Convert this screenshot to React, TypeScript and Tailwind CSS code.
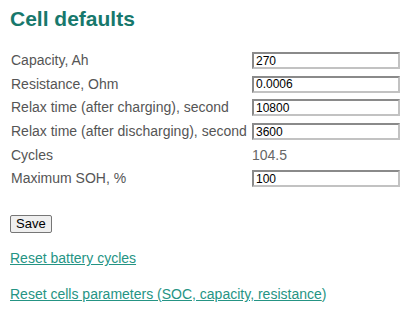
const rows: { label: string; value: string; input: boolean }[] = [
  { label: "Capacity, Ah", value: "270", input: true },
  { label: "Resistance, Ohm", value: "0.0006", input: true },
  { label: "Relax time (after charging), second", value: "10800", input: true },
  { label: "Relax time (after discharging), second", value: "3600", input: true },
  { label: "Cycles", value: "104.5", input: false },
  { label: "Maximum SOH, %", value: "100", input: true },
];

export default function App() {
  return (
    <div
      className="w-[416px] h-[313px] bg-white px-[10px] overflow-hidden"
      style={{ fontFamily: '"Liberation Sans", Arial, sans-serif' }}
    >
      {/* Title */}
      <h1 className="text-[21px] font-bold text-[#17786c] leading-none pt-[8px]">
        Cell defaults
      </h1>

      {/* Settings table */}
      <div className="mt-[20px] flex flex-col">
        {rows.map((r) => (
          <div key={r.label} className="flex items-center h-[23.6px]">
            <div className="w-[242px] pl-[1px] text-[14px] text-[#555] whitespace-nowrap">
              {r.label}
            </div>
            {r.input ? (
              <input
                readOnly
                value={r.value}
                className="w-[148px] h-[17px] px-[2px] text-[12px] text-black border-2 border-t-[#8a8a8a] border-l-[#8a8a8a] border-b-[#c2c2c2] border-r-[#c2c2c2] outline-none"
                style={{ fontFamily: '"Liberation Sans", Arial, sans-serif' }}
              />
            ) : (
              <div className="text-[14px] text-[#666]">{r.value}</div>
            )}
          </div>
        ))}
      </div>

      <button className="mt-[24px] h-[18px] px-[5px] text-[13px] leading-none text-black bg-[#efefef] border border-[#767676] rounded-[2px]">
        Save
      </button>

      <div className="mt-[13px] text-[14px]">
        <a href="#" className="text-[#259484] underline">
          Reset battery cycles
        </a>
      </div>
      <div className="mt-[15px] text-[14px] text-[#259484]">
        <a href="#" className="underline">
          Reset cells parameters (SOC, capacity, resistance
        </a>
        )
      </div>
    </div>
  );
}
